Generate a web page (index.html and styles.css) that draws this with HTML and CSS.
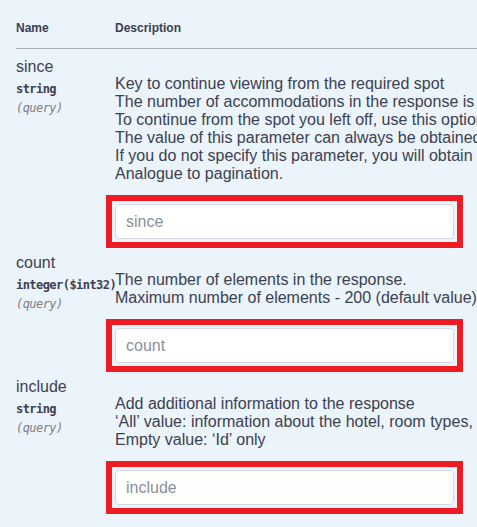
FILE: index.html
```html
<!DOCTYPE html>
<html lang="en">
<head>
<meta charset="utf-8">
<title>Parameters</title>
<link rel="stylesheet" href="styles.css">
</head>
<body>
<div class="params">
  <div class="head">
    <div class="col-name">Name</div>
    <div class="col-desc">Description</div>
  </div>
  <div class="rows">
    <div class="row">
      <div class="cell-name">
        <div class="pname">since</div>
        <div class="ptype">string</div>
        <div class="pin">(query)</div>
      </div>
      <div class="cell-desc">
        <p class="text">Key to continue viewing from the required spot<br>The number of accommodations in the response is limited<br>To continue from the spot you left off, use this option<br>The value of this parameter can always be obtained from the previous response<br>If you do not specify this parameter, you will obtain the first page<br>Analogue to pagination.</p>
        <div class="mark"><input class="field" type="text" placeholder="since"></div>
      </div>
    </div>
    <div class="row">
      <div class="cell-name">
        <div class="pname">count</div>
        <div class="ptype">integer($int32)</div>
        <div class="pin">(query)</div>
      </div>
      <div class="cell-desc">
        <p class="text">The number of elements in the response.<br>Maximum number of elements - 200 (default value)</p>
        <div class="mark"><input class="field" type="text" placeholder="count"></div>
      </div>
    </div>
    <div class="row">
      <div class="cell-name">
        <div class="pname">include</div>
        <div class="ptype">string</div>
        <div class="pin">(query)</div>
      </div>
      <div class="cell-desc">
        <p class="text">Add additional information to the response<br>‘All’ value: information about the hotel, room types, rates<br>Empty value: ‘Id’ only</p>
        <div class="mark"><input class="field" type="text" placeholder="include"></div>
      </div>
    </div>
  </div>
</div>
</body>
</html>
```

FILE: styles.css
```css
html, body {
  margin: 0;
  padding: 0;
  overflow: hidden;
}

body {
  background: #ebf3fb;
  color: #3b4151;
  font-family: "Liberation Sans", Arial, sans-serif;
}

.params {
  padding: 10px 0 0 16px;
}

/* table header */
.head {
  display: grid;
  grid-template-columns: 99px 1fr;
  padding: 11px 0 13px;
  border-bottom: 1px solid #aab1bd;
  font-size: 12px;
  line-height: 14px;
  font-weight: 700;
  width: 900px;
}

.rows {
  padding-top: 3px;
}

.row {
  display: grid;
  grid-template-columns: 99px 1fr;
  padding-top: 6px;
}

/* parameter name column */
.pname {
  font-size: 16px;
  line-height: 18px;
}

.ptype {
  font-family: "DejaVu Sans Mono", "Liberation Mono", monospace;
  font-size: 12px;
  line-height: 14px;
  font-weight: 700;
  letter-spacing: -0.55px;
  padding: 6px 0 5px;
  white-space: nowrap;
}

.pin {
  font-family: "DejaVu Sans Mono", "Liberation Mono", monospace;
  font-size: 12px;
  line-height: 14px;
  font-style: italic;
  letter-spacing: -0.55px;
  color: #808080;
}

/* description column */
.text {
  margin: 17px 0 12px;
  font-size: 16px;
  line-height: 18px;
  white-space: nowrap;
}

.mark {
  display: flex;
  width: max-content;
  margin-left: -9px;
  padding: 3px;
  border: 6px solid #ed1c24;
}

.field {
  box-sizing: border-box;
  width: 339px;
  height: 35px;
  margin: 0;
  padding: 0 10px;
  border: 1px solid #d5dae1;
  border-radius: 4px;
  background: #fff;
  font-family: "Liberation Sans", Arial, sans-serif;
  font-size: 16px;
  color: #3b4151;
  outline: none;
}

.field::placeholder {
  color: #8a909a;
}
```
